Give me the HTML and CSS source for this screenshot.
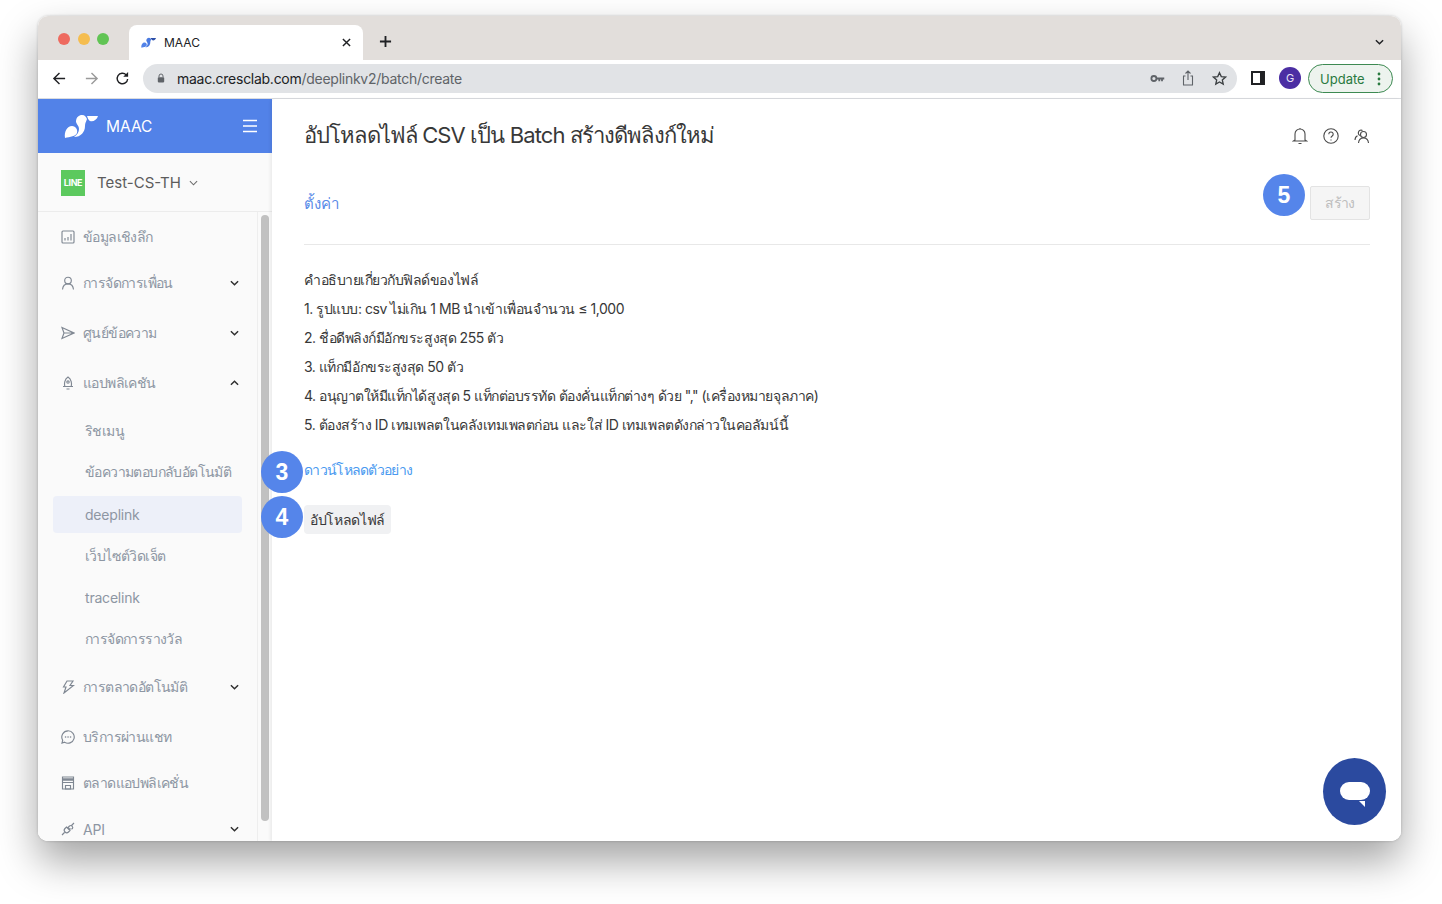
FILE: index.html
```html
<!DOCTYPE html>
<html lang="th">
  <head>
    <meta charset="utf-8">
    <meta name="viewport" content="width=device-width, initial-scale=1">
    <title>MAAC</title>
    <link rel="stylesheet" href="styles.css">
  </head>
  <body>
    <div class="window">

      <!-- tab strip -->
      <div class="tabstrip">
        <div class="lights">
          <span class="light red"></span>
          <span class="light yellow"></span>
          <span class="light green"></span>
        </div>
        <div class="tab">
          <svg class="tab-logo" viewBox="0 0 34 24"><path fill="#5282e8" d="M1 24C0 18 3 12 8 12c4 0 6 4 5 7-1 3-7 4-12 5z"/><path fill="#4a7ae0" d="M12 8c0-5 3-7 6-7s4 2 5 4c-1 3-2 4-2 7 0 6-4 11-11 11 3-2 5-5 5-8 0-3-2-4-3-7z"/><path fill="#2d4fa8" d="M22 2h12c-1 4-5 6-8 5-2-.5-3-3-4-5z"/></svg>
          <span class="tab-title">MAAC</span>
          <svg class="tab-close" viewBox="0 0 10 10"><path d="M1 1l8 8M9 1l-8 8"/></svg>
        </div>
        <svg class="new-tab" viewBox="0 0 14 14"><path d="M7 1v12M1 7h12"/></svg>
        <svg class="tab-menu" viewBox="0 0 10 6"><path d="M1 1l4 4 4-4"/></svg>
      </div>

      <!-- toolbar -->
      <div class="toolbar">
        <svg class="tool" viewBox="0 0 16 16"><path d="M14 8H2M8 2L2 8l6 6"/></svg>
        <svg class="tool dim" viewBox="0 0 16 16"><path d="M2 8h12M8 2l6 6-6 6"/></svg>
        <svg class="tool reload" viewBox="0 0 16 16"><path d="M13.5 8.500A5.600 5.600 0 1 1 12 4.200"/><path class="solid" d="M14 1v5.200H8.800z"/></svg>
        <div class="omnibox">
          <svg class="lock" viewBox="0 0 10 12"><path d="M2.500 5V3.500a2.500 2.500 0 0 1 5 0V5" fill="none" stroke="#5f6368" stroke-width="1.200"/><rect x="1" y="5" width="8" height="6.500" rx="1" fill="#5f6368"/></svg>
          <span class="url"><b>maac.cresclab.com</b>/deeplinkv2/batch/create</span>
          <svg class="omni-icon key" viewBox="0 0 16 10"><circle cx="4" cy="5" r="2.800" fill="none" stroke="#5f6368" stroke-width="2"/><path d="M7 4h8.500v2H14v2h-2V6h-1v2H9V6H7z" fill="#5f6368"/></svg>
          <svg class="omni-icon share" viewBox="0 0 12 16"><path d="M3.500 6H1.500v9h9V6h-2M6 10V1M3.500 3.500L6 1l2.500 2.500" fill="none" stroke="#5f6368" stroke-width="1.100"/></svg>
          <svg class="omni-icon star" viewBox="0 0 16 16"><path d="M8 1.800l1.900 4.200 4.500.5-3.400 3 1 4.500L8 11.700 4 14l1-4.500-3.400-3 4.500-.5z" fill="none" stroke="#3c4043" stroke-width="1.400"/></svg>
        </div>
        <svg class="side-panel" viewBox="0 0 14 14"><rect width="14" height="14" fill="#202124"/><rect x="2" y="2" width="7" height="10" fill="#fff"/></svg>
        <span class="avatar">G</span>
        <div class="update">
          <span>Update</span>
          <svg class="dots" viewBox="0 0 4 14"><circle cx="2" cy="2" r="1.400"/><circle cx="2" cy="7" r="1.400"/><circle cx="2" cy="12" r="1.400"/></svg>
        </div>
      </div>

      <div class="app">

        <!-- sidebar -->
        <aside class="sidebar">
          <div class="brand">
            <svg class="brand-logo" viewBox="0 0 34 24"><path fill="#fff" d="M1 24C0 18 3 12 8 12c4 0 6 4 5 7-1 3-7 4-12 5z"/><path fill="#fff" d="M12 8c0-5 3-7 6-7s4 2 5 4c-1 3-2 4-2 7 0 6-4 11-11 11 3-2 5-5 5-8 0-3-2-4-3-7z"/><path fill="#fff" d="M23 2h11c-1 4-5 6-8 5-1.500-.5-2.300-3-3-5z"/></svg>
            <span class="brand-name">MAAC</span>
            <svg class="burger" viewBox="0 0 16 14"><path d="M1 1.500h14M1 7h14M1 12.500h14"/></svg>
          </div>
          <div class="account">
            <span class="line-badge">LINE</span>
            <span class="account-name">Test-CS-TH</span>
            <svg class="account-caret" viewBox="0 0 10 6"><path d="M1 1l4 4 4-4"/></svg>
          </div>
          <div class="side-body">
            <nav class="nav">
              <a class="nav-item"><svg class="nav-icon" viewBox="0 0 14 14"><rect x="1" y="1" width="12" height="12" rx="1"/><path d="M4 10.500V8M7 10.500V7M10 10.500V4"/></svg>ข้อมูลเชิงลึก</a>
              <a class="nav-item has-sub"><svg class="nav-icon" viewBox="0 0 14 14"><circle cx="7" cy="4.500" r="3.300"/><path d="M1.500 13.500c.3-3.500 2.500-5.700 5.500-5.700s5.200 2.200 5.500 5.700"/></svg>การจัดการเพื่อน<svg class="chev" viewBox="0 0 10 6"><path d="M1 1l4 4 4-4"/></svg></a>
              <a class="nav-item has-sub"><svg class="nav-icon" viewBox="0 0 14 14"><path d="M1 1.500L13 7 1 12.500 3 7zM3 7h10"/></svg>ศูนย์ข้อความ<svg class="chev" viewBox="0 0 10 6"><path d="M1 1l4 4 4-4"/></svg></a>
              <a class="nav-item has-sub"><svg class="nav-icon" viewBox="0 0 14 14"><path d="M3.800 10.500C3 8 3.500 3 7 1c3.500 2 4 7 3.200 9.500zM2 10.500h10M5.500 13h3"/><circle cx="7" cy="6" r="1.200"/></svg>แอปพลิเคชัน<svg class="chev" viewBox="0 0 10 6"><path d="M1 5l4-4 4 4"/></svg></a>
              <div class="submenu">
                <a class="sub-item">ริชเมนู</a>
                <a class="sub-item">ข้อความตอบกลับอัตโนมัติ</a>
                <a class="sub-item latin active">deeplink</a>
                <a class="sub-item">เว็บไซต์วิดเจ็ต</a>
                <a class="sub-item latin">tracelink</a>
                <a class="sub-item">การจัดการรางวัล</a>
              </div>
              <a class="nav-item has-sub"><svg class="nav-icon" viewBox="0 0 14 14"><path d="M6 1h6L9 5.500h3.500L3 13l2-6H2.500z"/></svg>การตลาดอัตโนมัติ<svg class="chev" viewBox="0 0 10 6"><path d="M1 1l4 4 4-4"/></svg></a>
              <a class="nav-item"><svg class="nav-icon" viewBox="0 0 14 14"><path d="M7 .8a6.200 6.200 0 1 1-3.500 11.300L1 13l.7-2.800A6.200 6.200 0 0 1 7 .8z"/><path class="dot-line" d="M4.500 7h.1M7 7h.1M9.500 7h.1"/></svg>บริการผ่านแชท</a>
              <a class="nav-item"><svg class="nav-icon" viewBox="0 0 14 14"><path d="M1.500 1h11v12h-11zM1.500 6.500h11"/><path class="thick" d="M1.500 3.500h11"/><path d="M4.500 9.500h5V13h-5z"/></svg>ตลาดแอปพลิเคชั่น</a>
              <a class="nav-item has-sub latin"><svg class="nav-icon" viewBox="0 0 14 14"><path d="M1 13l2.500-2.500M13 1l-2.500 2.500M5.500 5L9 8.500 7.500 10a2.400 2.400 0 0 1-3.500-3.500zM8.500 7L7 5.500l1.500-1.500a2 2 0 0 1 2.800 2.800z"/></svg>API<svg class="chev" viewBox="0 0 10 6"><path d="M1 1l4 4 4-4"/></svg></a>
            </nav>
            <div class="scroll-track"><div class="scroll-thumb"></div></div>
          </div>
        </aside>

        <!-- main -->
        <main class="main">
          <div class="page-head">
            <h1>อัปโหลดไฟล์ CSV เป็น Batch สร้างดีพลิงก์ใหม่</h1>
            <div class="head-icons">
              <svg viewBox="0 0 16 18"><path d="M3 13V7a5 5 0 0 1 10 0v6l1.500 1h-13zM6.500 16.500h3M8 1v1"/></svg>
              <svg viewBox="0 0 16 16"><circle cx="8" cy="8" r="7.200"/><path d="M5.800 6.200a2.200 2.200 0 1 1 3.400 1.800c-.8.500-1.200 1-1.200 1.800M8 11.500v.9"/></svg>
              <svg viewBox="0 0 16 16"><circle cx="9.500" cy="6.500" r="3"/><path d="M4.500 15c.3-3 2.300-5 5-5s4.700 2 5 5M6 7.500C4.500 7 4 5.500 4.500 4S7 1.500 8.500 2.500M1 12c0-2 1-3.500 2.500-4.200"/></svg>
            </div>
          </div>
          <div class="tab-row">
            <a class="link settings">ตั้งค่า</a>
            <button class="create-btn" type="button" disabled>สร้าง</button>
            <span class="step step-5">5</span>
          </div>
          <div class="notes">
            <p>คำอธิบายเกี่ยวกับฟิลด์ของไฟล์</p>
            <p>1. รูปแบบ: csv ไม่เกิน 1 MB นำเข้าเพื่อนจำนวน ≤ 1,000</p>
            <p>2. ชื่อดีพลิงก์มีอักขระสูงสุด 255 ตัว</p>
            <p>3. แท็กมีอักขระสูงสุด 50 ตัว</p>
            <p>4. อนุญาตให้มีแท็กได้สูงสุด 5 แท็กต่อบรรทัด ต้องคั่นแท็กต่างๆ ด้วย "," (เครื่องหมายจุลภาค)</p>
            <p>5. ต้องสร้าง ID เทมเพลตในคลังเทมเพลตก่อน และใส่ ID เทมเพลตดังกล่าวในคอลัมน์นี้</p>
          </div>
          <div class="download-row">
            <span class="step step-3">3</span>
            <a class="link download">ดาวน์โหลดตัวอย่าง</a>
          </div>
          <div class="upload-row">
            <span class="step step-4">4</span>
            <button class="upload-btn" type="button">อัปโหลดไฟล์</button>
          </div>
          <div class="chat-fab">
            <svg viewBox="0 0 32 26"><rect x="1" y="0" width="30" height="18" rx="9" fill="#fff"/><path d="M20 19l6 0 0 6z" fill="#fff"/></svg>
          </div>
        </main>
      </div>
    </div>
  </body>
</html>
```

FILE: styles.css
```css
* {
  box-sizing: border-box;
}

body {
  margin: 0;
  background: #fff;
  font-family: Inter, "Noto Sans", "Liberation Sans", "DejaVu Sans", sans-serif;
  color: #383838;
  height: 904px;
  overflow: hidden;
  padding: 16px 41px 0 38px;
}

.window {
  display: flex;
  flex-direction: column;
  position: relative;
  height: 825px;
  border-radius: 10px;
  overflow: hidden;
  background: #fff;
}

/* the window clips its content, so its shadow is drawn behind it here */
body::before {
  content: "";
  position: absolute;
  top: 16px;
  left: 38px;
  width: 1363px;
  height: 825px;
  border-radius: 10px;
  box-shadow: 0 0 3px rgba(0, 0, 0, 0.2), 0 20px 40px rgba(0, 0, 0, 0.36);
}

/* tab strip */
.tabstrip {
  display: flex;
  align-items: flex-end;
  height: 44px;
  background: #e2dedb;
  flex: none;
  position: relative;
}

.lights {
  display: flex;
  gap: 7.500px;
  padding: 0 0 15px 20px;
  width: 91px;
  align-self: flex-end;
}

.light {
  width: 12px;
  height: 12px;
  border-radius: 50%;
}

.red { background: #ee6a5f; }
.yellow { background: #f5bd4f; }
.green { background: #61c454; }

.tab {
  display: flex;
  align-items: center;
  width: 234px;
  height: 35px;
  background: #fff;
  border-radius: 8px 8px 0 0;
  padding: 0 12px;
}

.tab-logo {
  width: 15px;
  height: 11px;
}

.tab-title {
  font-size: 12px;
  color: #202124;
  margin-left: 8px;
  flex: 1;
}

.tab-close {
  width: 9px;
  height: 9px;
  fill: none;
  stroke: #202124;
  stroke-width: 1.600;
}

.new-tab {
  width: 13px;
  height: 13px;
  margin: 0 0 12px 16px;
  fill: none;
  stroke: #202124;
  stroke-width: 2;
}

.tab-menu {
  width: 9px;
  height: 6px;
  margin: 0 17px 15px auto;
  fill: none;
  stroke: #202124;
  stroke-width: 1.600;
}

/* toolbar */
.toolbar {
  display: flex;
  align-items: center;
  height: 39px;
  flex: none;
  padding: 0 8px 2px 14px;
  background: #fff;
  border-bottom: 1px solid #dadce0;
}

.tool {
  width: 15px;
  height: 15px;
  margin-right: 17px;
  fill: none;
  stroke: #202124;
  stroke-width: 1.500;
}

.tool.dim {
  stroke: #9a9a9a;
  margin-right: 16px;
}

.tool .solid {
  fill: #202124;
  stroke: none;
}

.omnibox {
  display: flex;
  align-items: center;
  width: 1095px;
  height: 29px;
  margin-left: -4px;
  border-radius: 15px;
  background: #e1e3e6;
  padding: 0 10px 0 14px;
}

.lock {
  width: 8px;
  height: 10px;
}

.url {
  font-size: 14px;
  color: #5f6368;
  margin-left: 12px;
  flex: 1;
  letter-spacing: -0.27px;
}

.url b {
  font-weight: 400;
  color: #202124;
}

.omni-icon {
  margin-left: 17px;
}

.key { width: 15px; height: 9px; }
.share { width: 12px; height: 16px; }
.star { width: 15px; height: 15px; margin-left: 18px; }

.side-panel {
  width: 14px;
  height: 14px;
  margin-left: 14px;
}

.avatar {
  width: 22px;
  height: 22px;
  margin-left: 14px;
  border-radius: 50%;
  background: #4b2ea3;
  color: #e8e3f5;
  font-size: 11px;
  display: flex;
  align-items: center;
  justify-content: center;
}

.update {
  display: flex;
  align-items: center;
  justify-content: space-between;
  width: 85px;
  height: 29px;
  margin-left: 7px;
  border: 1px solid #3d8a52;
  border-radius: 15px;
  background: #edf3ee;
  color: #2a7a40;
  font-size: 13px;
  padding: 1px 11px 0 11px;
}

.dots {
  width: 4px;
  height: 14px;
  fill: #2a7a40;
}

/* app */
.app {
  display: flex;
  flex: 1;
  min-height: 0;
  background: #fff;
}

.sidebar {
  display: flex;
  flex-direction: column;
  width: 234px;
  flex: none;
  background: #fafafa;
}

.brand {
  display: flex;
  align-items: center;
  height: 54px;
  flex: none;
  background: #5282e8;
  padding: 0 14px 0 26px;
  color: #fff;
}

.brand-logo {
  width: 34px;
  height: 24px;
}

.brand-name {
  margin-left: 8px;
  font-size: 15.500px;
  flex: 1;
}

.burger {
  width: 16px;
  height: 14px;
  fill: none;
  stroke: #fff;
  stroke-width: 1.500;
}

.account {
  display: flex;
  align-items: center;
  height: 59px;
  flex: none;
  padding: 1px 0 0 23px;
  border-bottom: 1px solid #ececec;
}

.line-badge {
  width: 24px;
  height: 26px;
  background: #5cc95e;
  color: #fff;
  font-size: 9px;
  font-weight: 700;
  display: flex;
  align-items: center;
  justify-content: center;
  letter-spacing: -0.4px;
}

.account-name {
  margin-left: 12px;
  font-size: 15px;
  color: #5c5c5c;
}

.account-caret {
  width: 9px;
  height: 6px;
  margin-left: 8px;
  fill: none;
  stroke: #6c6c6c;
  stroke-width: 1.200;
}

.side-body {
  display: flex;
  flex: 1;
  min-height: 0;
  overflow: hidden;
}

.nav {
  width: 220px;
  flex: none;
  padding-top: 2px;
  border-right: 1px solid #eee;
}

.nav-item {
  display: flex;
  align-items: center;
  height: 46px;
  padding: 0 18px 0 23px;
  font-size: 14px;
  letter-spacing: -0.6px;
  color: #8d96a3;
}

.nav-item.has-sub {
  margin-bottom: 4px;
}

.nav-item.latin {
  letter-spacing: -0.2px;
}

.nav-icon {
  width: 14px;
  height: 14px;
  margin-right: 8px;
  flex: none;
  fill: none;
  stroke: #7f8792;
  stroke-width: 1.150;
}

.nav-icon .dot-line {
  stroke-width: 1.500;
  stroke-linecap: round;
}

.nav-icon .thick {
  stroke-width: 2.500;
}

.chev {
  width: 9px;
  height: 6px;
  margin-left: auto;
  fill: none;
  stroke: #2e2e2e;
  stroke-width: 1.600;
}

.submenu {
  margin-bottom: 4px;
}

.sub-item {
  display: flex;
  align-items: center;
  height: 41.500px;
  margin: 0 15px;
  padding-left: 32px;
  border-radius: 4px;
  font-size: 14px;
  letter-spacing: -0.6px;
  color: #8d96a3;
}

.sub-item.latin {
  letter-spacing: -0.2px;
}

.sub-item.active {
  height: 37.500px;
  margin-top: 2.500px;
  margin-bottom: 2.500px;
  background: #edf0f9;
}

.scroll-track {
  flex: 1;
  padding: 3px 3px 0 3px;
  background: #fafafa;
}

.scroll-thumb {
  height: 606px;
  width: 8px;
  border-radius: 4px;
  background: #c1c1c1;
}

/* main */
.main {
  flex: 1;
  position: relative;
  padding: 0 31px 0 32px;
  box-shadow: -2px 0 3px rgba(0, 0, 0, 0.06);
  border-top-left-radius: 4px;
}

.page-head {
  display: flex;
  align-items: center;
  justify-content: space-between;
  height: 72px;
}

h1 {
  margin: 0;
  font-size: 22px;
  font-weight: 400;
  letter-spacing: -0.9px;
  color: #383838;
}

.head-icons {
  display: flex;
  gap: 15px;
  align-items: center;
  margin-top: 1px;
}

.head-icons svg {
  width: 16px;
  height: 18px;
  fill: none;
  stroke: #4a4a4a;
  stroke-width: 1.100;
}

.tab-row {
  display: flex;
  align-items: center;
  justify-content: space-between;
  position: relative;
  height: 74px;
  border-bottom: 1px solid #e8e8e8;
  padding: 1px 0 10px;
}

.link {
  font-size: 14px;
  color: #5a8be8;
}

.settings {
  font-size: 15px;
  position: relative;
  top: 1px;
}

.create-btn {
  width: 60px;
  height: 34px;
  border: 1px solid #e3e3e3;
  border-radius: 2px;
  background: #f5f5f5;
  color: #bdbdbd;
  font: inherit;
  font-size: 14px;
  letter-spacing: -0.6px;
}

.notes {
  margin-top: 21px;
  font-size: 14px;
  line-height: 28.900px;
  letter-spacing: -0.47px;
  color: #383838;
}

.notes p {
  margin: 0;
}

.download-row {
  position: relative;
  margin-top: 16px;
  height: 30px;
  display: flex;
  align-items: center;
}

.download {
  color: #4a9af0;
  letter-spacing: -0.7px;
}

.upload-row {
  position: relative;
  margin-top: 20px;
}

.upload-btn {
  height: 29px;
  width: 87px;
  border: none;
  border-radius: 4px;
  background: #f0f1f3;
  color: #383838;
  font: inherit;
  font-size: 14px;
  letter-spacing: -0.3px;
  padding: 0;
}

/* numbered callouts drawn on top of the page */
.step {
  position: absolute;
  width: 42px;
  height: 42px;
  border-radius: 50%;
  background: #5585ea;
  color: #fff;
  font-size: 23px;
  font-weight: 700;
  display: flex;
  align-items: center;
  justify-content: center;
  font-family: "Liberation Sans", sans-serif;
}

.step-5 {
  right: 65px;
  top: 3px;
}

.step-3 {
  left: -43px;
  top: -4px;
}

.step-4 {
  left: -43px;
  top: -9px;
}

.chat-fab {
  position: absolute;
  right: 15px;
  bottom: 16px;
  width: 63px;
  height: 67px;
  border-radius: 50%;
  background: #2b4a9f;
  display: flex;
  align-items: center;
  justify-content: center;
}

.chat-fab svg {
  width: 32px;
  height: 26px;
  margin-top: 6px;
}
```
